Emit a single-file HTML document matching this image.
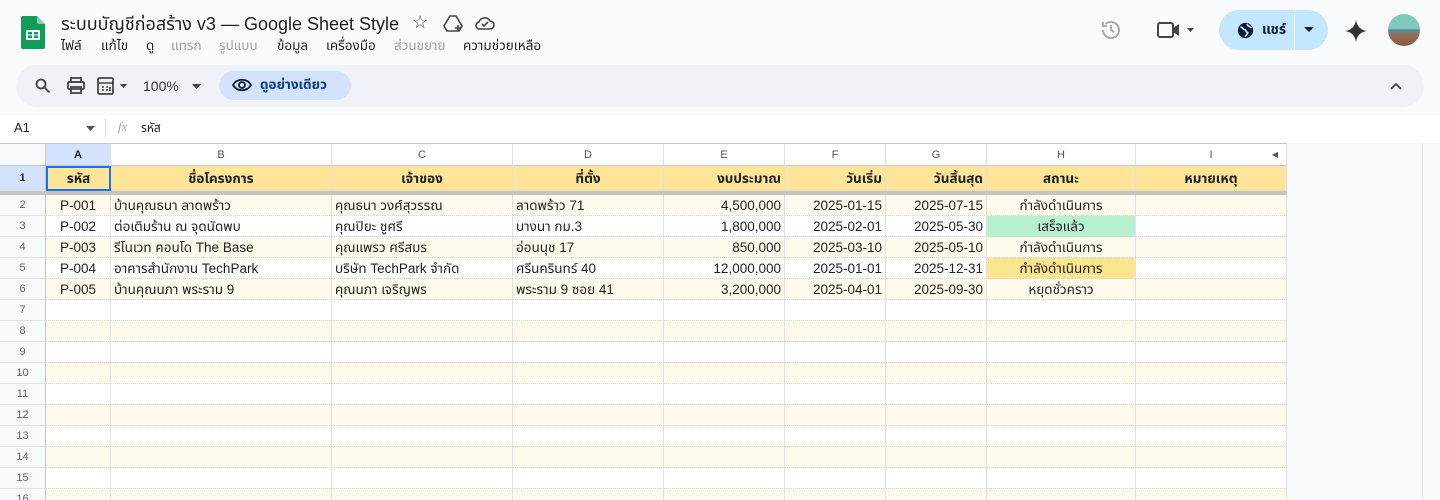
<!DOCTYPE html>
<html><head><meta charset="utf-8">
<style>
*{box-sizing:border-box;margin:0;padding:0}
body{width:1440px;height:500px;overflow:hidden;background:#f9fbfd;font-family:"Liberation Sans","Noto Sans Thai","Tlwg Typo","Loma","Garuda",sans-serif;color:#1f1f1f;position:relative}
.a{position:absolute}
.m{position:absolute;top:37px;font-size:13.5px;white-space:nowrap}
.grey{color:#9aa0a6}
.grid{position:absolute;left:0;top:143px;width:1422px;height:357px;background:#f8f9fa;overflow:hidden}
.row{position:absolute;left:0;height:21px;display:flex}
.c{height:100%;border-right:1px solid #e1e1e1;border-bottom:1px dotted #d6d6d6;font-size:13.5px;line-height:22px;padding:0 3px;white-space:nowrap;overflow:hidden}
.rh{width:46px;background:#f8f9fa;text-align:center;color:#5f6368;font-size:11px;line-height:21px;border-right:1px solid #c7c7c7;border-bottom:1px solid #e1e1e1}
.r{text-align:right}.ct{text-align:center}
</style></head><body>
<svg class="a" style="left:21px;top:16px" width="24" height="33" viewBox="0 0 24 33"><path d="M2 0h14l8 8v23a2 2 0 0 1-2 2H2a2 2 0 0 1-2-2V2a2 2 0 0 1 2-2z" fill="#0f9d58"/><path d="M16 0l8 8h-6a2 2 0 0 1-2-2z" fill="#87ceac"/><rect x="5" y="14" width="14" height="10" rx="1" fill="#fff"/><rect x="7" y="16" width="4" height="2.5" fill="#0f9d58"/><rect x="13" y="16" width="4" height="2.5" fill="#0f9d58"/><rect x="7" y="19.5" width="4" height="2.5" fill="#0f9d58"/><rect x="13" y="19.5" width="4" height="2.5" fill="#0f9d58"/></svg>
<div class="a" style="left:61px;top:12px;font-size:18px;color:#1f1f1f">ระบบบัญชีก่อสร้าง v3 — Google Sheet Style</div>
<div class="a" style="left:412px;top:12px;font-size:18px;color:#444">☆</div>
<svg class="a" style="left:443px;top:14px" width="20" height="18" viewBox="0 0 20 18" fill="none" stroke="#444" stroke-width="1.6"><path d="M7 2h6l6 10-3 5H4l-3-5z"/><path d="M15 11v6M12 14h6"/></svg>
<svg class="a" style="left:475px;top:15px" width="20" height="16" viewBox="0 0 20 16" fill="none" stroke="#444" stroke-width="1.6"><path d="M5 14h10a4 4 0 0 0 0-8 6 6 0 0 0-11 1 3.5 3.5 0 0 0 1 7z"/><path d="M7 9l2 2 4-4"/></svg>
<span class="m" style="left:61px">ไฟล์</span><span class="m" style="left:101px">แก้ไข</span><span class="m" style="left:146px">ดู</span><span class="m grey" style="left:171px">แทรก</span><span class="m grey" style="left:219px">รูปแบบ</span><span class="m" style="left:277px">ข้อมูล</span><span class="m" style="left:326px">เครื่องมือ</span><span class="m grey" style="left:394px">ส่วนขยาย</span><span class="m" style="left:463px">ความช่วยเหลือ</span>
<svg class="a" style="left:1100px;top:19px" width="22" height="22" viewBox="0 0 22 22" fill="none" stroke="#aaa" stroke-width="2"><path d="M3 11a8 8 0 1 0 2.5-5.8"/><path d="M3 3v4h4"/><path d="M11 6v5l3 2"/></svg>
<svg class="a" style="left:1157px;top:21px" width="40" height="18" viewBox="0 0 40 18"><rect x="1" y="2" width="15" height="14" rx="2" fill="none" stroke="#444" stroke-width="2"/><path d="M16 7l6-4v12l-6-4z" fill="#444"/><path d="M30 7h7l-3.5 4z" fill="#444"/></svg>
<div class="a" style="left:1219px;top:10px;width:109px;height:40px;border-radius:20px;background:#c2e7ff"></div>
<div class="a" style="left:1294px;top:10px;width:1px;height:40px;background:#f9fbfd"></div>
<svg class="a" style="left:1237px;top:22px" width="17" height="17" viewBox="0 0 20 20"><circle cx="10" cy="10" r="9" fill="#0b1d33"/><path d="M4 6c3 0 3 3 5 3s1 3 3 3-1 4-3 5M12 2c0 3 3 3 5 5" stroke="#c2e7ff" stroke-width="2" fill="none"/></svg>
<div class="a" style="left:1262px;top:20px;font-size:14px;font-weight:bold;color:#0b1d33">แชร์</div>
<svg class="a" style="left:1304px;top:27px" width="10" height="6"><path d="M0 0h10L5 5z" fill="#0b1d33"/></svg>
<svg class="a" style="left:1345px;top:20px" width="22" height="22" viewBox="0 0 22 22"><path d="M11 0C12 6 15 10 22 11 15 12 12 16 11 22 10 16 7 12 0 11 7 10 10 6 11 0z" fill="#333"/></svg>
<div class="a" style="left:1388px;top:14px;width:32px;height:32px;border-radius:50%;background:linear-gradient(#7fc9c0 0,#7fc9c0 45%,#5a8a95 50%,#9a6a50 70%,#8a5a40 100%)"></div>
<div class="a" style="left:16px;top:65px;width:1408px;height:42px;border-radius:21px;background:#eff2f7"></div>
<svg class="a" style="left:35px;top:78px" width="16" height="16" viewBox="0 0 16 16" fill="none" stroke="#444" stroke-width="1.8"><circle cx="6" cy="6" r="4.5"/><path d="M9.5 9.5l5 5"/></svg>
<svg class="a" style="left:67px;top:77px" width="18" height="17" viewBox="0 0 18 17" fill="none" stroke="#444" stroke-width="1.8"><rect x="4" y="1" width="10" height="4"/><rect x="1" y="5" width="16" height="7" rx="1"/><rect x="4" y="10" width="10" height="6"/></svg>
<svg class="a" style="left:97px;top:77px" width="34" height="18" viewBox="0 0 34 18"><rect x="1" y="1" width="15" height="16" rx="1.5" fill="none" stroke="#444" stroke-width="1.8"/><path d="M1 6h15M5 10h2M9 10h2M5 13h2M9 13h2M13 10v4" stroke="#444" stroke-width="1.6"/><path d="M23 7h7l-3.5 4z" fill="#444"/></svg>
<div class="a" style="left:143px;top:78px;font-size:14px;color:#333">100%</div>
<svg class="a" style="left:192px;top:84px" width="9" height="5"><path d="M0 0h9L4.5 5z" fill="#444"/></svg>
<div class="a" style="left:219px;top:71px;width:132px;height:29px;border-radius:15px;background:#d3e3fd"></div>
<svg class="a" style="left:232px;top:78px" width="20" height="14" viewBox="0 0 20 14" fill="none" stroke="#0b1d33" stroke-width="1.8"><path d="M1 7c4-7 14-7 18 0-4 7-14 7-18 0z"/><circle cx="10" cy="7" r="3"/></svg>
<div class="a" style="left:260px;top:76px;font-size:13.5px;font-weight:bold;color:#0b3d91">ดูอย่างเดียว</div>
<svg class="a" style="left:1390px;top:82px" width="12" height="8" viewBox="0 0 12 8" fill="none" stroke="#444" stroke-width="1.8"><path d="M1 7l5-5 5 5"/></svg>
<div class="a" style="left:0;top:115px;width:1440px;height:28px;background:#fff"></div>
<div class="a" style="left:14px;top:120px;font-size:13px">A1</div>
<svg class="a" style="left:86px;top:126px" width="9" height="5"><path d="M0 0h9L4.5 5z" fill="#555"/></svg>
<div class="a" style="left:105px;top:119px;width:1px;height:18px;background:#ddd"></div>
<div class="a" style="left:118px;top:119px;font-size:13px;font-style:italic;color:#aaa;font-family:'Liberation Serif',serif">fx</div>
<div class="a" style="left:141px;top:120px;font-size:12px">รหัส</div>
<div class="grid">
<div class="row" style="top:0;height:23px;border-top:1px solid #c7c7c7">
<div class="c rh" style="border-bottom:1px solid #c7c7c7"></div>
<div class="c ct" style="width:65px;background:#d3e3fd;font-weight:bold;font-size:11px;color:#1f1f1f;border-bottom:1px solid #c7c7c7;line-height:22px">A</div>
<div class="c ct" style="width:221px;background:#fff;font-size:11px;color:#555;border-bottom:1px solid #c7c7c7;line-height:22px">B</div>
<div class="c ct" style="width:181px;background:#fff;font-size:11px;color:#555;border-bottom:1px solid #c7c7c7;line-height:22px">C</div>
<div class="c ct" style="width:151px;background:#fff;font-size:11px;color:#555;border-bottom:1px solid #c7c7c7;line-height:22px">D</div>
<div class="c ct" style="width:121px;background:#fff;font-size:11px;color:#555;border-bottom:1px solid #c7c7c7;line-height:22px">E</div>
<div class="c ct" style="width:101px;background:#fff;font-size:11px;color:#555;border-bottom:1px solid #c7c7c7;line-height:22px">F</div>
<div class="c ct" style="width:101px;background:#fff;font-size:11px;color:#555;border-bottom:1px solid #c7c7c7;line-height:22px">G</div>
<div class="c ct" style="width:149px;background:#fff;font-size:11px;color:#555;border-bottom:1px solid #c7c7c7;line-height:22px">H</div>
<div class="c ct" style="width:151px;background:#fff;font-size:11px;color:#555;border-bottom:1px solid #c7c7c7;line-height:22px;position:relative">I<span style="position:absolute;right:8px;font-size:8px">◀</span></div>
</div>
<div class="row" style="top:23px;height:25px;background:#ffe599;font-weight:bold">
<div class="c rh" style="background:#d3e3fd;color:#1f1f1f;font-weight:bold;line-height:24px">1</div>
<div class="c ct" style="width:65px;border:2px solid #1a73e8;line-height:22px">รหัส</div>
<div class="c ct" style="width:221px;line-height:25px">ชื่อโครงการ</div>
<div class="c ct" style="width:181px;line-height:25px">เจ้าของ</div>
<div class="c ct" style="width:151px;line-height:25px">ที่ตั้ง</div>
<div class="c r" style="width:121px;line-height:25px">งบประมาณ</div>
<div class="c r" style="width:101px;line-height:25px">วันเริ่ม</div>
<div class="c r" style="width:101px;line-height:25px">วันสิ้นสุด</div>
<div class="c ct" style="width:149px;line-height:25px">สถานะ</div>
<div class="c ct" style="width:151px;line-height:25px">หมายเหตุ</div>
</div>
<div class="a" style="left:0;top:48px;width:1287px;height:4px;background:#c4c4c4"></div>
<div id="rows"></div>
</div>
<div class="a" style="left:1422px;top:143px;width:18px;height:357px;background:#fafafa;border-left:1px solid #e3e3e3"></div>
<div class="a" style="left:1287px;top:143px;width:135px;height:357px;background:#f8f9fa"></div>
<script>
var d=[["P-001","บ้านคุณธนา ลาดพร้าว","คุณธนา วงศ์สุวรรณ","ลาดพร้าว 71","4,500,000","2025-01-15","2025-07-15","กำลังดำเนินการ",""],
["P-002","ต่อเติมร้าน ณ จุดนัดพบ","คุณปิยะ ชูศรี","บางนา กม.3","1,800,000","2025-02-01","2025-05-30","เสร็จแล้ว","#b7f0cf"],
["P-003","รีโนเวท คอนโด The Base","คุณแพรว ศรีสมร","อ่อนนุช 17","850,000","2025-03-10","2025-05-10","กำลังดำเนินการ",""],
["P-004","อาคารสำนักงาน TechPark","บริษัท TechPark จำกัด","ศรีนครินทร์ 40","12,000,000","2025-01-01","2025-12-31","กำลังดำเนินการ","#ffe58f"],
["P-005","บ้านคุณนภา พระราม 9","คุณนภา เจริญพร","พระราม 9 ซอย 41","3,200,000","2025-04-01","2025-09-30","หยุดชั่วคราว",""]];
var w=[65,221,181,151,121,101,101,149,151],al=["ct","","","","r","r","r","ct",""],h="";
for(var i=0;i<15;i++){var n=i+2,bg=(n%2==0)?"#fefaec":"#fff",t=52+i*21,r=d[i]||null;
h+='<div class="row" style="top:'+t+'px;background:'+bg+'"><div class="c rh">'+n+'</div>';
for(var j=0;j<9;j++){var v=r?(j<8?r[j]:""):"",st="width:"+w[j]+"px;";if(r&&j==7&&r[8])st+="background:"+r[8]+";";
h+='<div class="c '+al[j]+'" style="'+st+'">'+v+'</div>';}
h+='</div>';}
document.getElementById("rows").innerHTML=h;
</script>
</body></html>
